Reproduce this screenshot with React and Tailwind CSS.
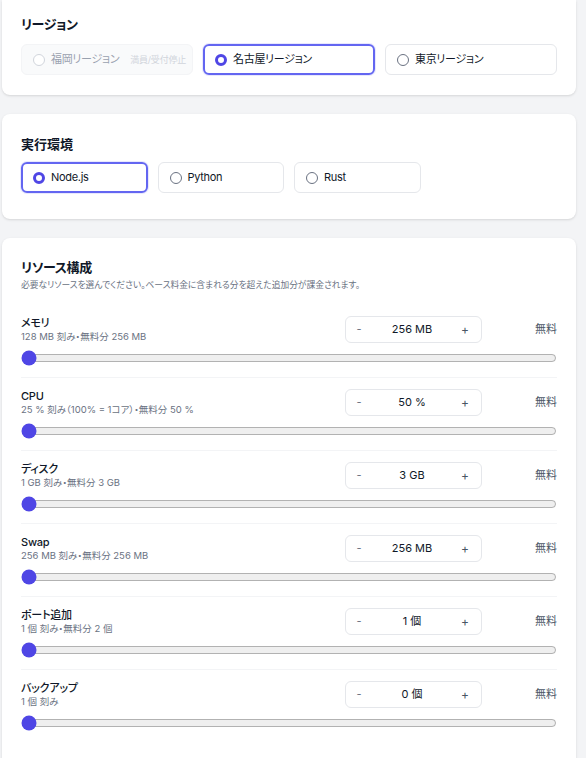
import { useState } from "react";

const regions = [
  { id: "fukuoka", name: "福岡リージョン", note: "満員/受付停止", disabled: true },
  { id: "nagoya", name: "名古屋リージョン" },
  { id: "tokyo", name: "東京リージョン" },
];

const runtimes = ["Node.js", "Python", "Rust"];

const resources = [
  { label: "メモリ", sub: "128 MB 刻み・無料分 256 MB", value: "256 MB" },
  { label: "CPU", sub: "25 % 刻み（100% = 1コア）・無料分 50 %", value: "50 %" },
  { label: "ディスク", sub: "1 GB 刻み・無料分 3 GB", value: "3 GB" },
  { label: "Swap", sub: "256 MB 刻み・無料分 256 MB", value: "256 MB" },
  { label: "ポート追加", sub: "1 個 刻み・無料分 2 個", value: "1 個" },
  { label: "バックアップ", sub: "1 個 刻み", value: "0 個" },
];

const Radio = ({ checked, disabled }) => (
  <span
    className={`w-[12px] h-[12px] rounded-full shrink-0 ${
      checked
        ? "border-[3.5px] border-[#4f46e5] bg-white"
        : disabled
        ? "border border-gray-300 bg-white"
        : "border-[1.5px] border-gray-500 bg-white"
    }`}
  />
);

const Option = ({ label, note, checked, disabled, onClick, height }) => (
  <button
    onClick={disabled ? undefined : onClick}
    className={`${height} flex items-center gap-[6px] rounded-md text-left ${
      checked
        ? "border-2 border-[#6366f1] pl-[10px] shadow-[0_0_0_1px_rgba(99,102,241,0.15)]"
        : disabled
        ? "border border-gray-100 bg-gray-50 pl-[11px] cursor-not-allowed"
        : "border border-gray-200 bg-white pl-[11px]"
    }`}
  >
    <Radio checked={checked} disabled={disabled} />
    <span
      className={`text-[11px] tracking-[-0.3px] ${
        disabled ? "text-gray-400" : "text-gray-900"
      }`}
    >
      {label}
    </span>
    {note && (
      <span className="text-[9px] tracking-[-0.2px] text-gray-300 ml-[5px]">
        {note}
      </span>
    )}
  </button>
);

const App = () => {
  const [region, setRegion] = useState("nagoya");
  const [runtime, setRuntime] = useState("Node.js");

  return (
    <div className="min-h-screen bg-[#f3f4f6] font-['Inter','Noto_Sans_CJK_JP',sans-serif] [font-feature-settings:'palt']">
      <div className="w-[574px] ml-[2px] flex flex-col gap-[19px]">
        <div className="bg-white rounded-b-lg shadow-sm px-[19px] pt-[14px] pb-[20px]">
          <div className="text-[13px] leading-5 font-semibold tracking-[-0.4px] text-gray-900">
            リージョン
          </div>
          <div className="grid grid-cols-3 gap-[10px] mt-[10px]">
            {regions.map((r) => (
              <Option
                key={r.id}
                label={r.name}
                note={r.note}
                disabled={r.disabled}
                checked={region === r.id}
                onClick={() => setRegion(r.id)}
                height="h-[31px]"
              />
            ))}
          </div>
        </div>

        <div className="bg-white rounded-lg shadow-sm px-[19px] pt-[20px] pb-[26px]">
          <div className="text-[13px] leading-5 font-semibold text-gray-900">
            実行環境
          </div>
          <div className="grid grid-cols-4 gap-[10px] mt-[8px]">
            {runtimes.map((r) => (
              <Option
                key={r}
                label={r}
                checked={runtime === r}
                onClick={() => setRuntime(r)}
                height="h-[31px]"
              />
            ))}
          </div>
        </div>

        <div className="bg-white rounded-t-lg shadow-sm px-[19px] pt-[19px] pb-[40px]">
          <div className="text-[13px] leading-5 font-semibold tracking-[-0.4px] text-gray-900">
            リソース構成
          </div>
          <div className="text-[8.75px] leading-[14px] text-gray-500 mt-[1px]">
            必要なリソースを選んでください。ベース料金に含まれる分を超えた追加分が課金されます。
          </div>
          <div className="mt-[13px]">
            {resources.map((res, i) => (
              <div
                key={res.label}
                className={`pt-[11px] pb-[11px] ${
                  i > 0 ? "border-t border-gray-100" : ""
                }`}
              >
                <div className="flex items-center h-[27px]">
                  <div className="flex-1">
                    <div className="text-[11px] leading-[14px] font-medium tracking-[-0.2px] text-gray-900">
                      {res.label}
                    </div>
                    <div className="text-[9.5px] leading-[13px] text-gray-500">
                      {res.sub}
                    </div>
                  </div>
                  <div className="w-[137px] h-[27px] border border-gray-200 rounded-md flex items-center justify-between pl-[9px] pr-[12px]">
                    <button className="text-[11px] text-gray-500 w-[8px]">-</button>
                    <span className="text-[11px] text-gray-900">{res.value}</span>
                    <button className="text-[12px] text-gray-600 w-[8px]">+</button>
                  </div>
                  <div className="w-[75px] text-right text-[11px] text-gray-600">
                    無料
                  </div>
                </div>
                <input
                  type="range"
                  min="0"
                  max="10"
                  defaultValue="0"
                  className="block w-full h-4 m-0 mt-[7px] accent-[#4f46e5]"
                />
              </div>
            ))}
          </div>
        </div>
      </div>
    </div>
  );
};

export default App;
